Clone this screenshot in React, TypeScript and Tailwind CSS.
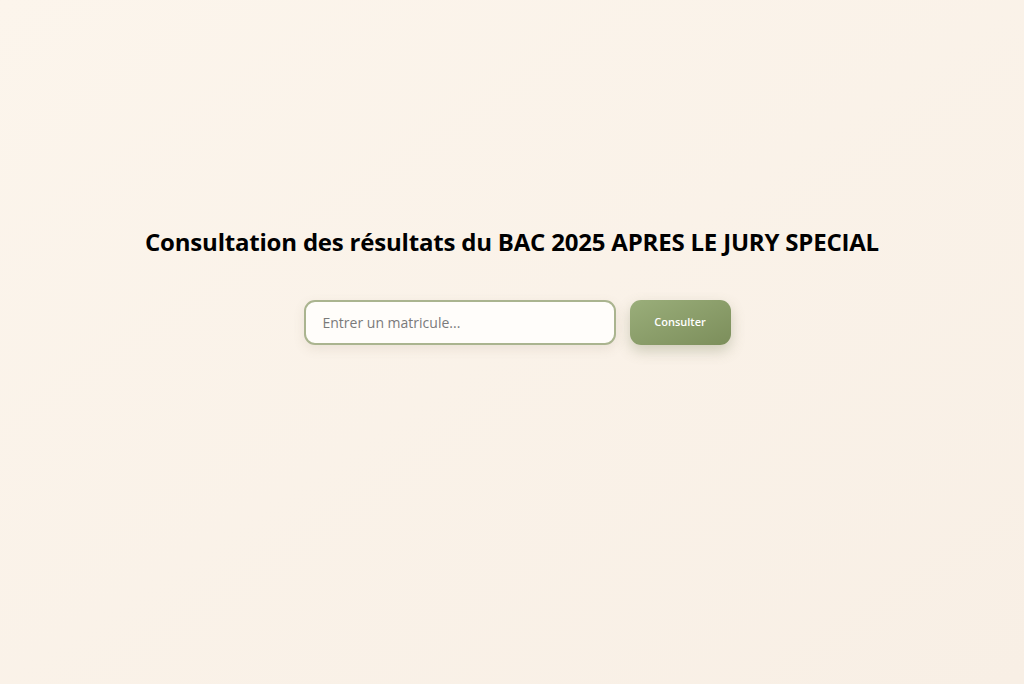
import React, { useState } from 'react';

export default function App() {
  const [matricule, setMatricule] = useState('');

  return (
    <div className="min-h-screen w-full bg-gradient-to-br from-[#fcf5ec] to-[#f8efe5] font-['Open_Sans',sans-serif] text-black">
      <div className="flex flex-col items-center pt-[226px]">
        <h1 className="text-[24px] font-bold leading-[32px] tracking-[-0.2px]">
          Consultation des résultats du BAC 2025 APRES LE JURY SPECIAL
        </h1>

        <form
          className="mt-[42px] flex items-center gap-[14px] pl-[10px]"
          onSubmit={(e) => e.preventDefault()}
        >
          <input
            value={matricule}
            onChange={(e) => setMatricule(e.target.value)}
            placeholder="Entrer un matricule..."
            className="h-[45px] w-[312px] rounded-[11px] border-2 border-[#aab48f] bg-[#fffdfa] px-[17px] text-[14px] text-gray-800 placeholder:text-[#7a7a7a] shadow-[0_4px_12px_rgba(120,110,80,0.12)] outline-none"
          />
          <button
            type="submit"
            className="h-[45px] w-[101px] rounded-[11px] bg-gradient-to-br from-[#9aae7a] to-[#7c8e5b] text-[11px] font-semibold text-white shadow-[0_6px_14px_rgba(110,120,80,0.3)]"
          >
            Consulter
          </button>
        </form>
      </div>
    </div>
  );
}
